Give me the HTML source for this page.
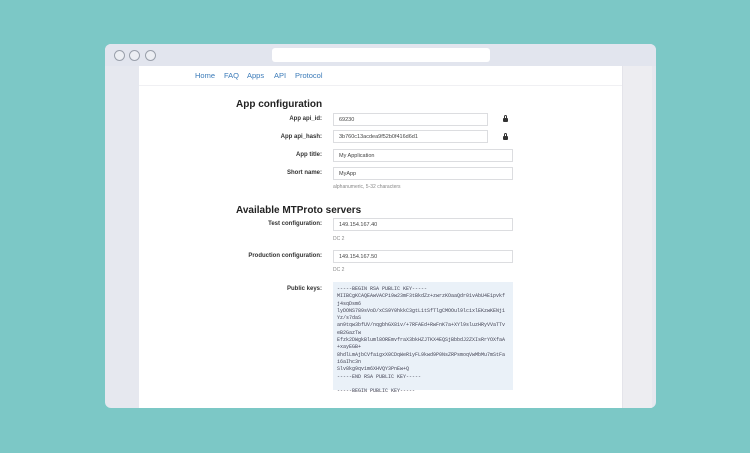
<!DOCTYPE html>
<html><head><style>
*{margin:0;padding:0;box-sizing:border-box}
body{width:750px;height:453px;background:#7cc8c6;position:relative;overflow:hidden;font-family:"Liberation Sans",sans-serif}
.win{position:absolute;left:105px;top:44px;width:551px;height:364px;background:#e6e8ef;border-radius:6px;overflow:hidden}
.bar{position:absolute;left:0;top:0;width:551px;height:22px;background:#e2e5ee}
.c{position:absolute;top:6px;width:11px;height:11px;border-radius:50%;border:1px solid #9aa0ab;background:#eceef3}
.url{position:absolute;left:167px;top:4px;width:218px;height:14px;background:#fff;border-radius:3px}
.side{position:absolute;top:22px;left:517px;width:30px;height:342px;background:#ededf1;border-left:1px solid #e4e4ea}
.main{position:absolute;left:34px;top:22px;width:483px;height:342px;background:#fff}
.nav{position:absolute;left:0;top:0;width:483px;height:20px;border-bottom:1px solid #f0f0f3}
.nav span{position:absolute;top:5px;font-size:7.5px;color:#3a7ab8}
.a{position:absolute;font-size:6px;color:#333}
.l{font-weight:bold;text-align:right;width:120px}
h2{position:absolute;font-size:10px;color:#222;font-weight:bold}
.in{position:absolute;height:13px;border:1px solid #dcdde0;background:#fff;font-size:5.5px;color:#444;padding:3px 5px}
.g{color:#888;font-size:5px}
.lock{position:absolute;width:5px;height:4px;background:#333;border-radius:1px}
.lock:before{content:"";position:absolute;left:1px;top:-3px;width:3px;height:3px;border:1px solid #333;border-bottom:none;border-radius:2px 2px 0 0;box-sizing:border-box}
.pk{position:absolute;left:194px;top:216px;width:180px;height:108px;background:#eaf1f8;font-family:"Liberation Mono",monospace;font-size:5px;color:#445;padding:4px 4px;line-height:7.3px;white-space:pre}
</style></head><body>
<div class="win">
<div class="bar"><div class="c" style="left:9px"></div><div class="c" style="left:24px"></div><div class="c" style="left:40px"></div><div class="url"></div></div>
<div class="side"></div>
<div class="main">
<div class="nav"><span style="left:56px">Home</span><span style="left:85px">FAQ</span><span style="left:108px">Apps</span><span style="left:135px">API</span><span style="left:156px">Protocol</span></div>
<h2 style="left:97px;top:33px">App configuration</h2>
<div class="a l" style="left:63px;top:50px">App api_id:</div><div class="in" style="left:194px;top:47px;width:155px">69230</div><div class="lock" style="left:364px;top:52px"></div>
<div class="a l" style="left:63px;top:68px">App api_hash:</div><div class="in" style="left:194px;top:64px;width:155px">3b760c13acdea9f52b0f416d6d1</div><div class="lock" style="left:364px;top:70px"></div>
<div class="a l" style="left:63px;top:86px">App title:</div><div class="in" style="left:194px;top:83px;width:180px">My Application</div>
<div class="a l" style="left:63px;top:104px">Short name:</div><div class="in" style="left:194px;top:101px;width:180px">MyApp</div>
<div class="a g" style="left:194px;top:118px">alphanumeric, 5-32 characters</div>
<h2 style="left:97px;top:139px">Available MTProto servers</h2>
<div class="a l" style="left:63px;top:155px">Test configuration:</div><div class="in" style="left:194px;top:152px;width:180px">149.154.167.40</div>
<div class="a g" style="left:194px;top:170px">DC 2</div>
<div class="a l" style="left:63px;top:187px">Production configuration:</div><div class="in" style="left:194px;top:184px;width:180px">149.154.167.50</div>
<div class="a g" style="left:194px;top:201px">DC 2</div>
<div class="a l" style="left:63px;top:220px">Public keys:</div>
<div class="pk">-----BEGIN RSA PUBLIC KEY-----
MIIBCgKCAQEAwVACPi9w23mF3tBkdZz+zwrzKOaaQdr01vAbU4E1pvkf
j4sqDsm6
lyDONS789sVoD/xCS9Y0hkkC3gtL1tSfTlgCMOOul9lcixlEKzwKENj1
Yz/s7daS
an9tqw3bfUV/nqgbhGX81v/+7RFAEd+RwFnK7a+XYl9sluzHRyVVaTTv
eB2GazTw
Efzk2DWgkBluml8OREmvfraX3bkHZJTKX4EQSjBbbdJ2ZXIsRrYOXfaA
+xayEGB+
8hdlLmAjbCVfaigxX0CDqWeR1yFL9kwd9P0NsZRPsmoqVwMbMu7mStFa
i6aIhc3n
Slv8kg9qv1m6XHVQY3PnEw+Q
-----END RSA PUBLIC KEY-----

-----BEGIN PUBLIC KEY-----</div>
</div>
</div>
</body></html>
